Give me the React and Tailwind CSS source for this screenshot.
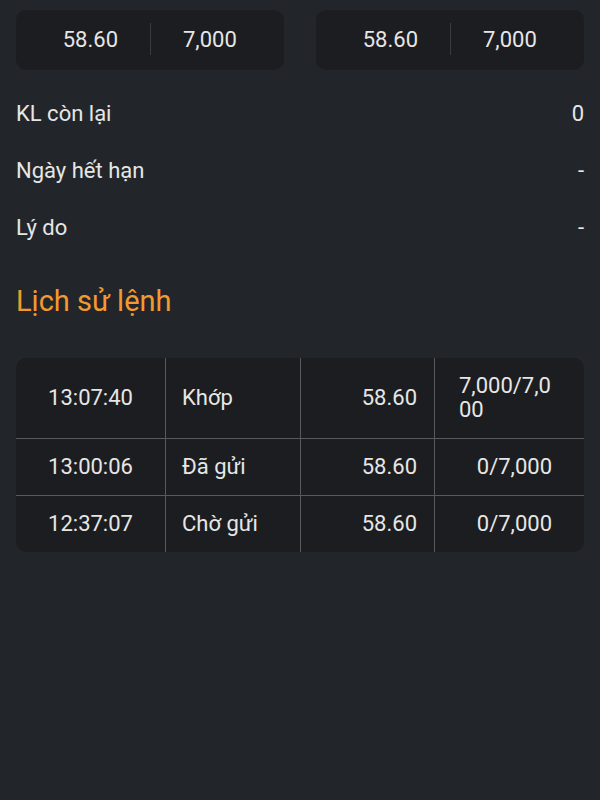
import React from 'react';

const quotes = [
  { price: '58.60', qty: '7,000' },
  { price: '58.60', qty: '7,000' },
];

const details = [
  { label: 'KL còn lại', value: '0' },
  { label: 'Ngày hết hạn', value: '-' },
  { label: 'Lý do', value: '-' },
];

const history = [
  { time: '13:07:40', status: 'Khớp', price: '58.60', filled: '7,000/7,000' },
  { time: '13:00:06', status: 'Đã gửi', price: '58.60', filled: '0/7,000' },
  { time: '12:37:07', status: 'Chờ gửi', price: '58.60', filled: '0/7,000' },
];

export default function App() {
  return (
    <div
      className="min-h-[800px] w-[600px] bg-[#22262b] px-4 pt-[10px] text-[22px] text-[#e6e6e6]"
      style={{ fontFamily: 'Roboto, "Noto Sans", sans-serif' }}
    >
      {/* price / volume cards */}
      <div className="grid grid-cols-2 gap-8">
        {quotes.map((q, i) => (
          <div key={i} className="flex h-[60px] items-center rounded-[10px] bg-[#1c1d20] pb-[2px]">
            <div className="w-[134px] pr-8 text-right">{q.price}</div>
            <div className="h-8 w-px bg-[#3a3b3e]" />
            <div className="flex-1 pl-8">{q.qty}</div>
          </div>
        ))}
      </div>

      <div className="mt-[15px]">
        {details.map((d) => (
          <div key={d.label} className="flex h-[57px] items-center justify-between">
            <span>{d.label}</span>
            <span>{d.value}</span>
          </div>
        ))}
      </div>

      <h2 className="mt-[27px] text-[29px] leading-9 text-[#f29a2e]">Lịch sử lệnh</h2>

      <div className="mt-[39px] overflow-hidden rounded-[10px] bg-[#1c1d20] leading-6">
        {history.map((r, i) => (
          <div
            key={r.time}
            className={
              'grid grid-cols-[149px_135px_134px_1fr] ' +
              (i > 0 ? 'border-t border-[#56595e]' : '')
            }
          >
            <div className="flex items-center justify-center py-4">{r.time}</div>
            <div className="flex items-center border-l border-[#56595e] py-4 pl-4">{r.status}</div>
            <div className="flex items-center justify-end border-l border-[#56595e] py-4 pr-[17px]">{r.price}</div>
            <div className="flex items-center justify-end border-l border-[#56595e] py-4 pl-6 pr-8">
              <span className="break-all">{r.filled}</span>
            </div>
          </div>
        ))}
      </div>
    </div>
  );
}
